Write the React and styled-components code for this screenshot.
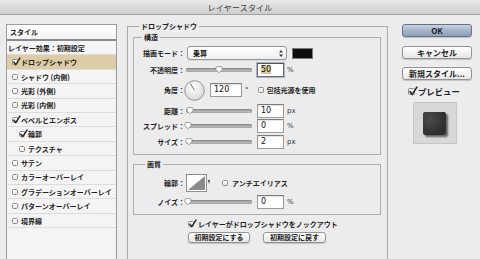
import React from 'react';
import styled, { createGlobalStyle } from 'styled-components';

const Global = createGlobalStyle`
  html, body { margin: 0; padding: 0; background: #ececec; }
  * { box-sizing: border-box; }
`;

const JP = `"Noto Sans CJK JP", "Noto Sans", sans-serif`;
const NUM = `"DejaVu Sans", "Liberation Sans", sans-serif`;

const Window = styled.div`
  width: 480px;
  height: 259px;
  overflow: hidden;
  background: #ececec;
  display: flex;
  flex-direction: column;
  font-family: ${JP};
  color: #222;
`;

const TitleBar = styled.div`
  height: 15px;
  flex: none;
  background: linear-gradient(#e9e9e9, #cdcdcd);
  border-bottom: 1px solid #a2a2a2;
  display: flex;
  align-items: center;
  justify-content: center;
  font-size: 8px;
  color: #3a3a3a;
  letter-spacing: 0.2px;
`;

const Body = styled.div`
  flex: 1;
  display: flex;
  align-items: flex-start;
  padding-left: 6px;
`;

/* ---------- left list ---------- */
const StyleList = styled.div`
  margin-top: 9px;
  width: 111px;
  height: 250px;
  flex: none;
  border: 1px solid #9c9c9c;
  background: #f4f4f4;
  display: flex;
  flex-direction: column;
`;

const ListHeader = styled.div`
  height: 16px;
  flex: none;
  background: linear-gradient(#ffffff, #f3f3f3);
  border-bottom: 2px solid #8a8a8a;
  display: flex;
  align-items: center;
  padding-left: 3px;
  font-size: 7px;
  font-weight: 700;
`;

const ListRow = styled.div`
  height: 14.42px;
  flex: none;
  display: flex;
  align-items: center;
  padding-left: ${p => p.$pl}px;
  border-bottom: 1px solid #dcdcdc;
  background: ${p => (p.$selected ? '#dccda6' : 'transparent')};
  font-size: 7px;
  font-weight: 700;
  white-space: nowrap;
  gap: 3px;
`;

/* ---------- checkbox ---------- */
const Box = styled.span`
  position: relative;
  flex: none;
  display: inline-block;
  width: ${p => p.$s}px;
  height: ${p => p.$s}px;
  border: 1px solid #8a8a8a;
  border-radius: 1.5px;
  background: linear-gradient(#ffffff, #e9e9e9);
`;

const Tick = styled.svg`
  position: absolute;
  left: -1px;
  top: -3px;
`;

const Check = ({ checked, size = 6 }) => (
  <Box $s={size}>
    {checked && (
      <Tick width={size + 3} height={size + 3} viewBox="0 0 10 10">
        <path d="M1.6 5.2 L4.2 8.4 L9.2 0.6" fill="none" stroke="#2a2a2a" strokeWidth="1.7" />
      </Tick>
    )}
  </Box>
);

/* ---------- group boxes ---------- */
const OuterGroup = styled.fieldset`
  margin: 6px 0 0 10px;
  padding: 0 6px 0 5px;
  width: 261px;
  height: 260px;
  flex: none;
  border: 1px solid #a9a9a9;
  border-bottom: none;
  min-inline-size: 0;
  display: flex;
  flex-direction: column;
`;

const Group = styled.fieldset`
  margin: ${p => p.$mt}px 0 0 0;
  padding: 0 0 ${p => p.$pb}px 0;
  width: 248px;
  border: 1px solid #adadad;
  min-inline-size: 0;
`;

const Legend = styled.legend`
  padding: 0 2px;
  margin-left: ${p => p.$ml}px;
  font-size: 7px;
  font-weight: 700;
  line-height: 10px;
`;

const Row = styled.div`
  display: flex;
  align-items: center;
  height: ${p => p.$h || 14}px;
  margin-top: ${p => p.$mt || 0}px;
  padding-left: ${p => p.$pl || 0}px;
`;

const Label = styled.span`
  width: 51px;
  flex: none;
  text-align: right;
  font-size: 7px;
  font-weight: 700;
  white-space: nowrap;
`;

const Text = styled.span`
  font-size: 7px;
  font-weight: 700;
  white-space: nowrap;
  margin-left: ${p => p.$ml || 0}px;
`;

const Unit = styled.span`
  font-family: ${NUM};
  font-size: 7px;
  margin-left: ${p => p.$ml || 3}px;
  color: #333;
`;

const Select = styled.div`
  margin-left: 2px;
  width: 100px;
  height: 14px;
  border: 1px solid #959595;
  border-radius: 3px;
  background: linear-gradient(#ffffff, #efefef);
  box-shadow: 0 1px 0 rgba(0, 0, 0, 0.08);
  display: flex;
  align-items: center;
  justify-content: space-between;
  padding: 0 3px 0 5px;
  font-size: 7px;
  font-weight: 700;
`;

const Swatch = styled.div`
  margin-left: 5px;
  width: 21px;
  height: 11px;
  background: #0e0e0e;
  border: 1px solid #7c7c7c;
`;

const Track = styled.div`
  position: relative;
  margin-left: 1px;
  width: 66px;
  height: 4px;
  flex: none;
  border-radius: 2px;
  background: linear-gradient(#8c8c8c, #d2d2d2);
  box-shadow: inset 0 0 0 0.5px #888;
`;

const Thumb = styled.svg`
  position: absolute;
  top: -2px;
`;

const Slider = ({ pos }) => (
  <Track>
    <Thumb width="8" height="8" viewBox="0 0 8 8" style={{ left: `${pos - 4}px` }}>
      <path d="M1 1.6 Q1 0.6 2 0.6 H6 Q7 0.6 7 1.6 V3.8 L4 6.8 L1 3.8 Z" fill="#fdfdfd" stroke="#8a8a8a" strokeWidth="0.8" />
    </Thumb>
  </Track>
);

const Field = styled.div`
  margin-left: ${p => p.$ml || 5}px;
  width: ${p => p.$w || 27}px;
  height: 14px;
  flex: none;
  background: #fff;
  border: 1px solid ${p => (p.$focus ? '#6e6e6e' : '#9a9a9a')};
  border-top-color: ${p => (p.$focus ? '#555' : '#7c7c7c')};
  box-shadow: ${p => (p.$focus ? '0 0 0 1px #aab3c4' : 'inset 0 1px 1px rgba(0,0,0,0.12)')};
  font-family: ${NUM};
  font-size: 8px;
  line-height: 12px;
  padding-left: 3px;
  color: #111;
`;

const Selected = styled.span`
  background: #d9c79b;
`;

const Dial = styled.svg`
  margin-left: -1px;
  flex: none;
`;

const Contour = styled.svg`
  margin-left: 1px;
  flex: none;
`;

const ActionRow = styled.div`
  display: flex;
  gap: 13px;
  margin-top: 3px;
  padding-left: 55px;
`;

const PushButton = styled.button`
  font-family: ${JP};
  font-size: ${p => p.$fs || 7}px;
  font-weight: 700;
  color: #222;
  width: ${p => p.$w}px;
  height: ${p => p.$h || 12}px;
  margin-top: ${p => p.$mt || 0}px;
  padding: 0;
  border: 1px solid ${p => (p.$primary ? '#61718a' : '#939393')};
  border-radius: 3px;
  background: ${p =>
    p.$primary
      ? 'linear-gradient(#c9d3e0, #a5b4c8 50%, #8e9fb7)'
      : 'linear-gradient(#ffffff, #f3f3f3 50%, #e6e6e6)'};
  box-shadow: 0 1px 1px rgba(0, 0, 0, 0.18);
  display: flex;
  align-items: center;
  justify-content: center;
  line-height: 1;
  white-space: nowrap;
  flex: none;
`;

/* ---------- right column ---------- */
const Side = styled.div`
  margin: 9px 0 0 14px;
  width: 70px;
  flex: none;
  display: flex;
  flex-direction: column;
`;

const PreviewToggle = styled.div`
  margin-top: 6px;
  height: 10px;
  display: flex;
  align-items: center;
  gap: 3px;
  padding-left: 6px;
  font-size: 8.4px;
  font-weight: 700;
`;

const PreviewBox = styled.div`
  margin: 6px 0 0 11px;
  width: 44px;
  height: 42px;
  background: #d8d8d8;
  border: 1px solid #c6c6c6;
  display: flex;
  align-items: center;
  justify-content: center;
`;

const PreviewSwatch = styled.div`
  width: 23px;
  height: 23px;
  margin: 0 1px 0 0;
  border-radius: 2px;
  background: radial-gradient(circle at 30% 30%, #4a4a4a, #2f2f2f 70%);
  box-shadow: 2px 2px 2px rgba(0, 0, 0, 0.55);
`;

const layers = [
  { label: 'ドロップシャドウ', checked: true, selected: true },
  { label: 'シャドウ (内側)' },
  { label: '光彩 (外側)' },
  { label: '光彩 (内側)' },
  { label: 'ベベルとエンボス', checked: true },
  { label: '輪郭', checked: true, indent: true },
  { label: 'テクスチャ', indent: true },
  { label: 'サテン' },
  { label: 'カラーオーバーレイ' },
  { label: 'グラデーションオーバーレイ' },
  { label: 'パターンオーバーレイ' },
  { label: '境界線' },
];

const sliders = [
  { label: '距離：', pos: 4, value: '10', unit: 'px', mt: 3 },
  { label: 'スプレッド：', pos: 2, value: '0', unit: '%', mt: 1 },
  { label: 'サイズ：', pos: 3, value: '2', unit: 'px', mt: 2 },
];

export default function App() {
  return (
    <Window>
      <Global />
      <TitleBar>レイヤースタイル</TitleBar>
      <Body>
        <StyleList>
          <ListHeader>スタイル</ListHeader>
          <ListRow $pl={1}>レイヤー効果：初期設定</ListRow>
          {layers.map(l => (
            <ListRow key={l.label} $pl={l.indent ? 12 : 5} $selected={l.selected}>
              <Check checked={l.checked} size={6} />
              {l.label}
            </ListRow>
          ))}
        </StyleList>

        <OuterGroup>
          <Legend $ml={6}>ドロップシャドウ</Legend>
          <Group $mt={1} $pb={5}>
            <Legend $ml={8}>構造</Legend>
            <Row $mt={4}>
              <Label>描画モード：</Label>
              <Select>
                乗算
                <svg width="4" height="7" viewBox="0 0 4 7">
                  <path d="M0 2.6 L2 0 L4 2.6 Z M0 4.4 L2 7 L4 4.4 Z" fill="#333" />
                </svg>
              </Select>
              <Swatch />
            </Row>
            <Row $mt={3}>
              <Label>不透明度：</Label>
              <Slider pos={33} />
              <Field $focus>
                <Selected>50</Selected>
              </Field>
              <Unit>%</Unit>
            </Row>
            <Row $mt={2} $h={22}>
              <Label>角度：</Label>
              <Dial width="21" height="21" viewBox="0 0 21 21">
                <defs>
                  <radialGradient id="dialg" cx="45%" cy="35%" r="70%">
                    <stop offset="0" stopColor="#ffffff" />
                    <stop offset="1" stopColor="#d6d6d6" />
                  </radialGradient>
                </defs>
                <circle cx="10.5" cy="10.5" r="9.8" fill="url(#dialg)" stroke="#8a8a8a" strokeWidth="0.9" />
                <line x1="10.5" y1="10.5" x2="6.3" y2="3.2" stroke="#666" strokeWidth="0.9" />
              </Dial>
              <Field $w={32} $ml={5}>120</Field>
              <Unit $ml={3}>°</Unit>
              <Text $ml={9}>
                <Check size={6} />
              </Text>
              <Text $ml={3}>包括光源を使用</Text>
            </Row>
            {sliders.map(s => (
              <Row key={s.label} $mt={s.mt}>
                <Label>{s.label}</Label>
                <Slider pos={s.pos} />
                <Field>{s.value}</Field>
                <Unit>{s.unit}</Unit>
              </Row>
            ))}
          </Group>

          <Group $mt={4} $pb={5}>
            <Legend $ml={11}>画質</Legend>
            <Row $mt={5} $h={18}>
              <Label>輪郭：</Label>
              <Contour width="25" height="18" viewBox="0 0 25 18">
                <rect x="0.5" y="0.5" width="20" height="17" fill="#fff" stroke="#8d8d8d" />
                <polygon points="2,16 19,2 19,16" fill="#8a8a8a" />
                <path d="M22 6 L24 6 L23 10 Z" fill="#333" />
              </Contour>
              <Text $ml={11}>
                <Check size={6} />
              </Text>
              <Text $ml={4}>アンチエイリアス</Text>
            </Row>
            <Row $mt={3}>
              <Label>ノイズ：</Label>
              <Slider pos={2} />
              <Field>0</Field>
              <Unit>%</Unit>
            </Row>
          </Group>

          <Row $mt={4} $h={10} $pl={55}>
            <Check checked size={6} />
            <Text $ml={4}>レイヤーがドロップシャドウをノックアウト</Text>
          </Row>
          <ActionRow>
            <PushButton $w={62} $h={11}>初期設定にする</PushButton>
            <PushButton $w={63} $h={11}>初期設定に戻す</PushButton>
          </ActionRow>
        </OuterGroup>

        <Side>
          <PushButton $primary $w={70} $h={13} $fs={8}>OK</PushButton>
          <PushButton $w={70} $h={13} $fs={8} $mt={9}>キャンセル</PushButton>
          <PushButton $w={70} $h={13} $fs={8} $mt={8}>新規スタイル...</PushButton>
          <PreviewToggle>
            <Check checked size={7} />
            プレビュー
          </PreviewToggle>
          <PreviewBox>
            <PreviewSwatch />
          </PreviewBox>
        </Side>
      </Body>
    </Window>
  );
}
